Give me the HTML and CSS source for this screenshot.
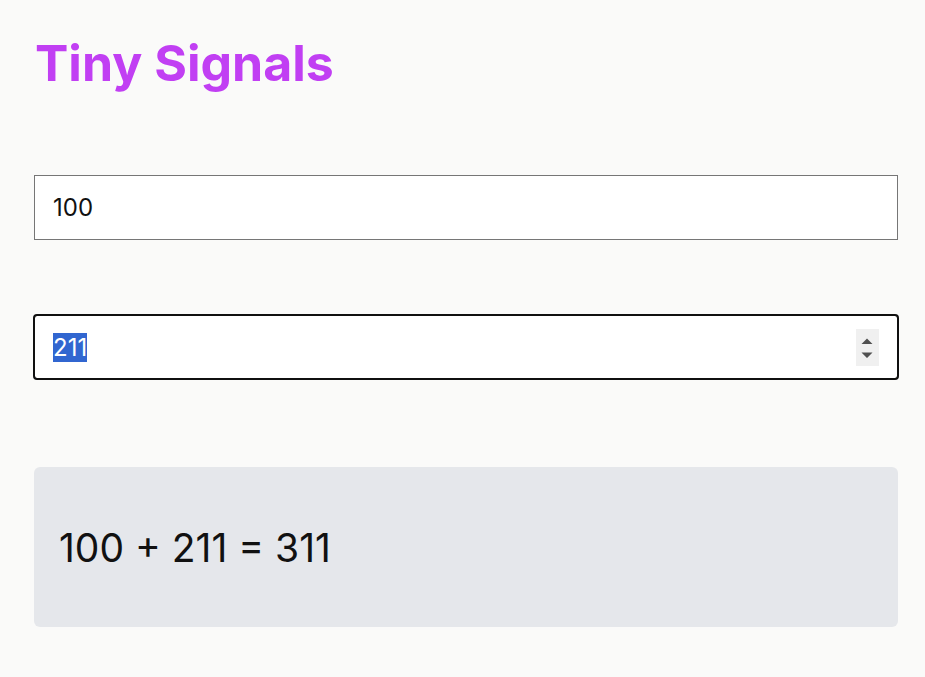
FILE: index.html
```html
<!DOCTYPE html>
<html lang="en">
<head>
<meta charset="utf-8">
<title>Tiny Signals</title>
<link rel="stylesheet" href="styles.css">
</head>
<body>
<main class="app">
  <h1 class="title">Tiny Signals</h1>
  <input class="field" type="text" value="100">
  <input class="field field-number" id="b" type="number" value="211" autofocus>
  <div class="result">100 + 211 = 311</div>
</main>
<script src="app.js"></script>
</body>
</html>
```
FILE: styles.css
```css
html, body {
  margin: 0;
  padding: 0;
  background: #fafaf9;
}
body {
  font-family: Inter, "Noto Sans", sans-serif;
  color: #111;
}
.app {
  display: flex;
  flex-direction: column;
  padding: 33px 27px 0 34px;
}
.title {
  margin: 0 0 82px 1px;
  font-size: 50px;
  font-weight: 700;
  line-height: 60px;
  color: #c13ff3;
}
.field {
  box-sizing: border-box;
  height: 65px;
  width: 100%;
  margin: 0;
  padding: 0 18px;
  font-family: Inter, "Noto Sans", sans-serif;
  font-size: 24px;
  color: #111;
  background: #fff;
  border: 1px solid #767676;
  border-radius: 0;
}
.field-number {
  margin-top: 75px;
  height: 64px;
  padding-right: 18px;
}
.field-number:focus {
  outline: 2px solid #101010;
  outline-offset: -1px;
  border-radius: 3px;
}
.field-number::-webkit-inner-spin-button {
  -webkit-appearance: none;
  appearance: none;
  opacity: 1;
  width: 23px;
  height: 37px;
  margin: 0;
  background: #f0f0f0 url("data:image/svg+xml,%3Csvg xmlns='http://www.w3.org/2000/svg' width='23' height='37' viewBox='0 0 23 37'%3E%3Cpath d='M5.5 15 L11 9.5 L16.5 15 Z M5.5 23.5 L11 29 L16.5 23.5 Z' fill='%23505050'/%3E%3C/svg%3E") no-repeat center;
}
.field::selection {
  background: #3166d0;
  color: #fff;
}
.result {
  margin-top: 88px;
  height: 160px;
  box-sizing: border-box;
  display: flex;
  align-items: center;
  padding: 0 25px;
  background: #e5e7eb;
  border-radius: 6px;
  font-size: 39px;
  color: #111;
}
```
FILE: app.js
```js
window.addEventListener('load', function () {
  var b = document.getElementById('b');
  b.focus();
  b.select();
});
```
